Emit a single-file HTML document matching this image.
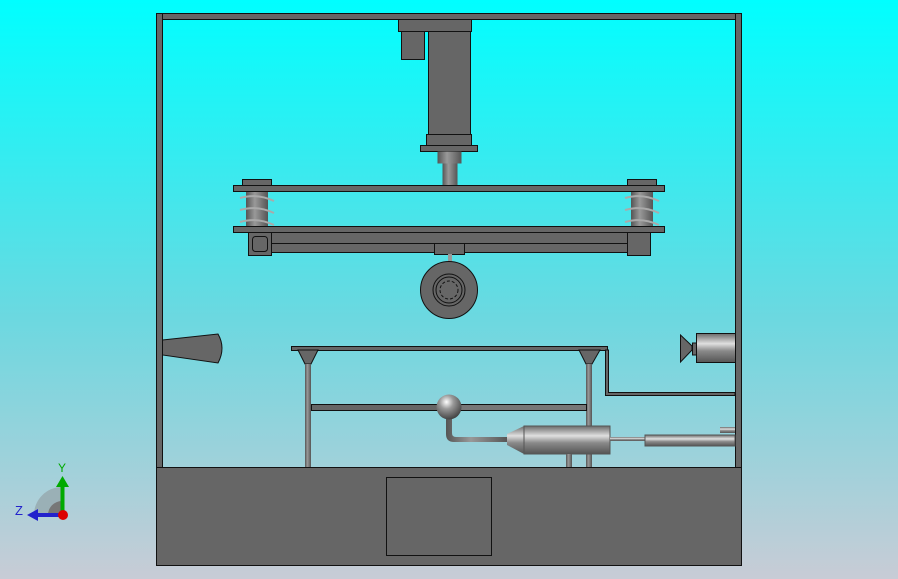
<!DOCTYPE html><html><head><style>body{margin:0}svg{display:block}</style></head><body>
<svg width="898" height="579" xmlns="http://www.w3.org/2000/svg" font-family="Liberation Sans, sans-serif">
<defs>
<linearGradient id="bg" x1="0" y1="0" x2="0" y2="1"><stop offset="0" stop-color="#00ffff"/><stop offset="0.55" stop-color="#6cd8e0"/><stop offset="1" stop-color="#c8ccd6"/></linearGradient>
<linearGradient id="cy" x1="0" y1="0" x2="0" y2="1"><stop offset="0" stop-color="#6a6a6a"/><stop offset="0.35" stop-color="#e0e0e0"/><stop offset="0.6" stop-color="#8a8a8a"/><stop offset="1" stop-color="#555"/></linearGradient>
<linearGradient id="cx" x1="0" y1="0" x2="1" y2="0"><stop offset="0" stop-color="#555"/><stop offset="0.4" stop-color="#999"/><stop offset="1" stop-color="#555"/></linearGradient>
<radialGradient id="ball" cx="0.4" cy="0.3" r="0.7"><stop offset="0" stop-color="#fff"/><stop offset="0.4" stop-color="#999"/><stop offset="1" stop-color="#444"/></radialGradient>
</defs>
<rect width="898" height="579" fill="url(#bg)"/>
<g stroke="#111" stroke-width="1" fill="#666">
<rect x="156.5" y="13.5" width="585" height="6"/>
<rect x="156.5" y="13.5" width="6" height="454"/>
<rect x="735.5" y="13.5" width="6" height="454"/>
<rect x="156.5" y="467.5" width="585" height="98"/>
<rect x="386.5" y="477.5" width="105" height="78"/>
<rect x="398.5" y="19.5" width="73" height="12"/>
<rect x="401.5" y="31.5" width="23" height="28"/>
<rect x="428.5" y="31.5" width="42" height="103"/>
<rect x="426.5" y="134.5" width="45" height="11"/>
<rect x="420.5" y="145.5" width="57" height="6"/>
<rect x="437.5" y="151.5" width="24" height="12" fill="url(#cx)" stroke="none"/>
<rect x="442.5" y="163.5" width="15" height="23" fill="url(#cx)" stroke="none"/>
<rect x="242.5" y="179.5" width="29" height="7"/>
<rect x="627.5" y="179.5" width="29" height="7"/>
<rect x="246" y="192" width="22" height="35" fill="url(#cx)" stroke="none"/>
<rect x="631" y="192" width="22" height="35" fill="url(#cx)" stroke="none"/>
<rect x="233.5" y="185.5" width="431" height="6"/>
<rect x="233.5" y="226.5" width="431" height="6"/>
<rect x="248.5" y="232.5" width="402" height="11"/>
<rect x="248.5" y="243.5" width="402" height="9"/>
<rect x="248.5" y="232.5" width="23" height="23"/>
<rect x="627.5" y="232.5" width="23" height="23"/>
<rect x="252.5" y="236.5" width="15" height="15" rx="3"/>
<rect x="434.5" y="243.5" width="30" height="11"/>
<rect x="448" y="254" width="4" height="10" fill="#999" stroke="none"/>
<ellipse cx="449" cy="290" rx="28.5" ry="28.5"/>
<circle cx="449" cy="290" r="16" fill="none"/>
<circle cx="449" cy="290" r="13" fill="none"/>
<circle cx="449" cy="290" r="9" fill="none" stroke-dasharray="3 2"/>
<path d="M162.5 340 L218 334 Q226 348 218 363 L162.5 355 Z"/>
<rect x="291.5" y="346.5" width="316" height="4"/>
<path d="M298 350 L318 350 L311 364 L305 364 Z"/>
<path d="M579 350 L600 350 L592 364 L586 364 Z"/>
<rect x="305" y="364" width="6" height="103" fill="url(#cx)" stroke="none"/>
<rect x="586" y="364" width="6" height="103" fill="url(#cx)" stroke="none"/>
<path d="M605.5 350 L608.5 350 L608.5 392.5 L735 392.5 L735 395.5 L605.5 395.5 Z" fill="#666"/>
<rect x="311.5" y="404.5" width="126" height="6"/>
<rect x="460.5" y="404.5" width="126" height="6" fill="#777"/>
<path d="M446 418 L446 434 Q446 442 454 442 L508 442 L508 437 L456 437 Q452 437 452 433 L452 418 Z" fill="url(#cx)" stroke="none"/>
<circle cx="449" cy="407" r="12.5" fill="url(#ball)" stroke="none"/>
<path d="M507 434 L524 426 L524 454 L507 445 Z" fill="url(#cy)" stroke="none"/>
<rect x="524" y="426" width="86" height="28" fill="url(#cy)" stroke="#555"/>
<rect x="610" y="437" width="36" height="4" fill="url(#cy)" stroke="none"/>
<rect x="645" y="435" width="90" height="11" fill="url(#cy)" stroke="#555"/>
<rect x="720" y="427" width="15" height="6" fill="url(#cy)" stroke="none"/>
<rect x="566" y="454" width="6" height="13" fill="url(#cx)" stroke="none"/>
<path d="M680.5 335 L692 346 L692 350 L680.5 362 Z"/>
<rect x="692.5" y="343" width="4" height="12"/>
<rect x="696.5" y="333.5" width="39" height="29" fill="url(#cy)"/>
</g>
<g stroke="#aaa" stroke-width="2" fill="none">
<path d="M240 198 Q257 193 274 201 M240 210 Q257 205 274 213 M240 222 Q257 217 274 225"/>
<path d="M625 198 Q642 193 659 201 M625 210 Q642 205 659 213 M625 222 Q642 217 659 225"/>
</g>
<path d="M62 515 L34 515 A28 28 0 0 1 62 487 Z" fill="#9ab0b6"/>
<path d="M62 515 L48 515 A14 14 0 0 1 62 501 Z" fill="#777"/>
<rect x="60.5" y="486" width="4" height="28" fill="#0a0"/>
<path d="M56 487 L62.5 476 L69 487 Z" fill="#0a0"/>
<rect x="36" y="513" width="26" height="4" fill="#22c"/>
<path d="M38 509 L27 515 L38 521 Z" fill="#22c"/>
<circle cx="63" cy="515" r="5" fill="#d00"/>
<text x="58" y="472" font-size="12" fill="#0a0">Y</text>
<text x="15" y="515" font-size="13" fill="#22c">Z</text>
</svg></body></html>
